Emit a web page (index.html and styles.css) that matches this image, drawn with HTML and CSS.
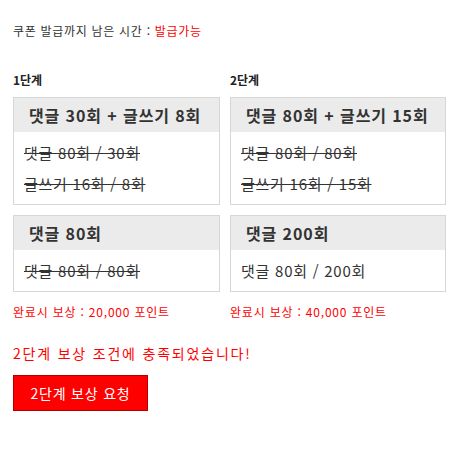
FILE: index.html
```html
<!DOCTYPE html>
<html lang="ko">
<head>
<meta charset="utf-8">
<link rel="stylesheet" href="styles.css">
</head>
<body>
<div class="page">
  <p class="timer">쿠폰 발급까지 남은 시간 : <span class="red">발급가능</span></p>
  <div class="stages">
    <div class="stage">
      <h3 class="stage-title">1단계</h3>
      <div class="box">
        <div class="box-head">댓글 30회 + 글쓰기 8회</div>
        <div class="box-body">
          <div class="line done">댓글 80회 / 30회</div>
          <div class="line done">글쓰기 16회 / 8회</div>
        </div>
      </div>
      <div class="box">
        <div class="box-head">댓글 80회</div>
        <div class="box-body">
          <div class="line done">댓글 80회 / 80회</div>
        </div>
      </div>
      <p class="reward">완료시 보상 : 20,000 포인트</p>
    </div>
    <div class="stage">
      <h3 class="stage-title">2단계</h3>
      <div class="box">
        <div class="box-head">댓글 80회 + 글쓰기 15회</div>
        <div class="box-body">
          <div class="line done">댓글 80회 / 80회</div>
          <div class="line done">글쓰기 16회 / 15회</div>
        </div>
      </div>
      <div class="box">
        <div class="box-head">댓글 200회</div>
        <div class="box-body">
          <div class="line">댓글 80회 / 200회</div>
        </div>
      </div>
      <p class="reward">완료시 보상 : 40,000 포인트</p>
    </div>
  </div>
  <p class="notice">2단계 보상 조건에 충족되었습니다!</p>
  <button class="req-btn" type="button">2단계 보상 요청</button>
</div>
</body>
</html>
```

FILE: styles.css
```css
html, body {
  margin: 0;
  padding: 0;
  background: #fff;
}
body {
  font-family: "Noto Sans CJK KR", "Noto Sans", sans-serif;
  color: #333;
}
.page {
  padding: 22px 13px 0 13px;
}
.timer {
  margin: 0;
  font-size: 12px;
  line-height: 18px;
  letter-spacing: 0.7px;
  color: #333;
}
.red {
  color: #ff0000;
}
.stages {
  display: grid;
  grid-template-columns: 207px 216px;
  column-gap: 10px;
  margin-top: 31px;
}
.stage-title {
  margin: 0 0 8px 0;
  font-size: 12px;
  line-height: 18px;
  font-weight: bold;
  color: #222;
}
.box {
  border: 1px solid #d6d6d6;
  margin-bottom: 10px;
}
.box-head {
  background: #ebebeb;
  height: 34px;
  line-height: 34px;
  padding-left: 15px;
  font-size: 16px;
  font-weight: bold;
  letter-spacing: 0.9px;
  color: #333;
}
.box-body {
  padding: 5px 10px;
}
.line {
  font-size: 15px;
  line-height: 31px;
  letter-spacing: 0.75px;
  color: #333;
}
.line.done {
  text-decoration: line-through;
}
.reward {
  margin: 11px 0 0 0;
  font-size: 12px;
  line-height: 18px;
  letter-spacing: 0.8px;
  color: #ff0000;
}
.notice {
  margin: 22px 0 0 0;
  font-size: 14px;
  line-height: 20px;
  letter-spacing: 1.8px;
  color: #ff0000;
}
.req-btn {
  margin-top: 12px;
  width: 135px;
  height: 36px;
  background: #ff0000;
  border: 1px solid #b00000;
  color: #fff;
  font-family: "Noto Sans CJK KR", "Noto Sans", sans-serif;
  font-size: 14px;
  letter-spacing: 0.8px;
  padding: 0;
  cursor: pointer;
}
```
